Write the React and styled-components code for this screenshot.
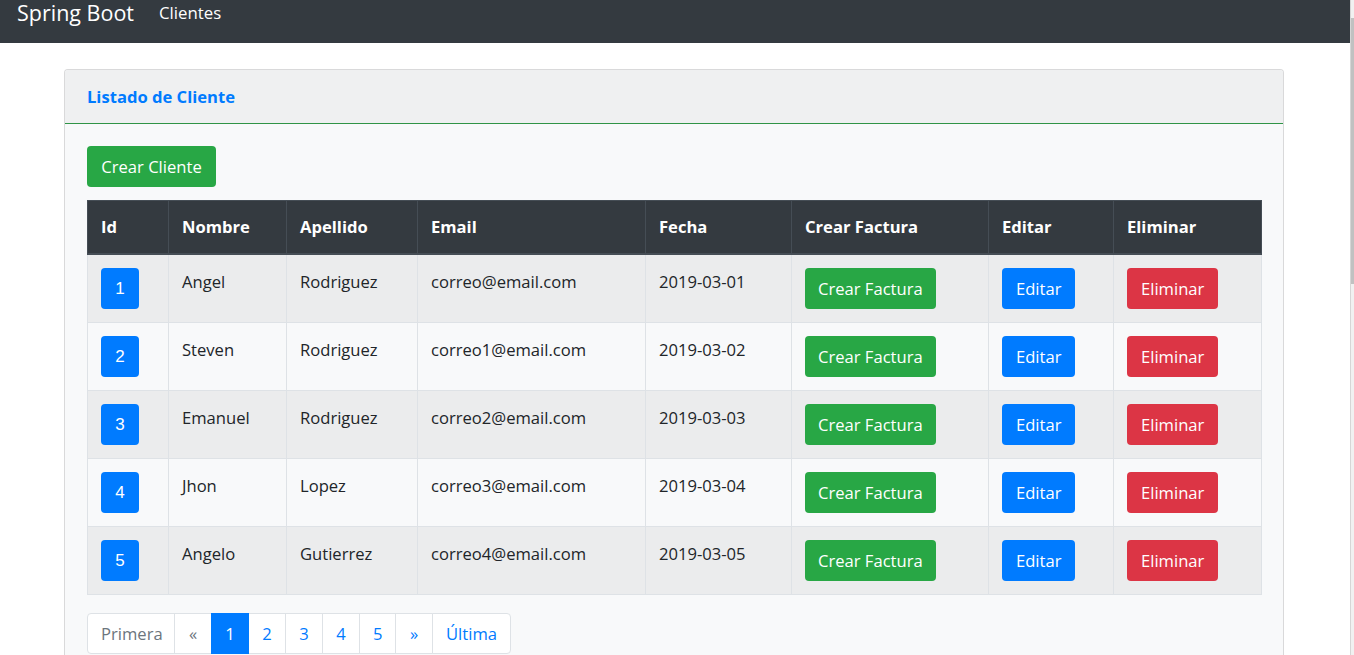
import React from "react";
import styled, { createGlobalStyle } from "styled-components";

const GlobalStyle = createGlobalStyle`
  html, body { margin: 0; padding: 0; background: #fff; overflow: hidden; }
  body {
    font-family: "Open Sans", "Noto Sans", sans-serif;
    color: #212529;
    font-size: 16.6px;
  }
  * { box-sizing: border-box; }
`;

const Page = styled.div`
  width: 1350px;
  height: 655px;
`;

const Navbar = styled.nav`
  height: 43px;
  background: #343a40;
  display: flex;
  align-items: flex-start;
  padding: 0 17px;
`;

const Brand = styled.a`
  color: #fff;
  font-size: 21.5px;
  line-height: 26px;
  margin-right: 25px;
  text-decoration: none;
`;

const NavLink = styled.a`
  color: #fff;
  font-size: 16.8px;
  line-height: 26px;
  text-decoration: none;
`;

const Main = styled.main`
  padding: 26px 66px 0 64px;
`;

const Card = styled.section`
  border: 1px solid rgba(0, 0, 0, 0.125);
  border-radius: 4px;
  background: #f8f9fa;
  overflow: hidden;
`;

const CardHeader = styled.header`
  background: #eff0f1;
  border-bottom: 1px solid #2f9446;
  height: 54px;
  padding: 0 22px;
  display: flex;
  align-items: center;
`;

const Title = styled.h5`
  margin: 0;
  color: #007bff;
  font-size: 16.6px;
  font-weight: 700;
`;

const CardBody = styled.div`
  padding: 22px 22px 40px 22px;
`;

const Button = styled.a`
  display: inline-flex;
  align-items: center;
  justify-content: center;
  height: 41px;
  padding: 0 ${(p) => (p.$pad ? p.$pad : 13)}px;
  border-radius: 4px;
  color: #fff;
  font-size: 16.6px;
  text-decoration: none;
  white-space: nowrap;
  background: ${(p) =>
    p.$variant === "success" ? "#28a745" : p.$variant === "danger" ? "#dc3545" : "#007bff"};
`;

const TopButton = styled(Button)`
  margin-bottom: 13px;
  width: 129px;
`;

const Table = styled.table`
  width: 100%;
  border-collapse: collapse;
  table-layout: fixed;
`;

const Th = styled.th`
  background: #343a40;
  color: #fff;
  text-align: left;
  font-weight: 700;
  font-size: 16.6px;
  border: 1px solid #454d55;
  border-bottom: 2px solid #454d55;
  padding: 13px 13px 13px;
  line-height: 26px;
`;

const Tr = styled.tr`
  background: ${(p) => (p.$odd ? "#ebeced" : "#f8f9fa")};
`;

const Td = styled.td`
  border: 1px solid #dee2e6;
  padding: 14px 13px 12px;
  vertical-align: top;
  line-height: 26px;
  font-size: 16.6px;
  height: 68px;
`;

const ButtonTd = styled(Td)`
  padding: 13px 13px;
`;

const IdBadge = styled(Button)`
  width: 38px;
  padding: 0;
  font-family: "Liberation Sans", Arial, sans-serif;
  font-size: 17px;
`;

const Pagination = styled.ul`
  display: flex;
  list-style: none;
  margin: 18px 0 0 0;
  padding: 0;
`;

const PageItem = styled.li`
  & + & a { margin-left: -1px; }
  &:first-child a { border-radius: 4px 0 0 4px; }
  &:last-child a { border-radius: 0 4px 4px 0; }
`;

const PageLink = styled.a`
  display: block;
  height: 41px;
  line-height: 22px;
  padding: 9px 13px;
  font-size: 16.6px;
  border: 1px solid #dee2e6;
  text-decoration: none;
  width: ${(p) => p.$w}px;
  text-align: center;
  white-space: nowrap;
  position: relative;
  background: ${(p) => (p.$active ? "#007bff" : "#fff")};
  border-color: ${(p) => (p.$active ? "#007bff" : "#dee2e6")};
  color: ${(p) => (p.$active ? "#fff" : p.$disabled ? "#6c757d" : "#007bff")};
  z-index: ${(p) => (p.$active ? 1 : 0)};
`;

const Rail = styled.div`
  position: fixed;
  top: 0;
  right: 0;
  width: 4px;
  height: 100%;
  background: #f1f1f1;
  border-left: 1px solid #d6d6d6;
`;

const Thumb = styled.div`
  margin-top: 18px;
  height: 266px;
  background: #c1c1c1;
`;

const cols = [
  ["Id", 81],
  ["Nombre", 118],
  ["Apellido", 131],
  ["Email", 228],
  ["Fecha", 146],
  ["Crear Factura", 197],
  ["Editar", 125],
  ["Eliminar", 148],
];

const clientes = [
  [1, "Angel", "Rodriguez", "correo@email.com", "2019-03-01"],
  [2, "Steven", "Rodriguez", "correo1@email.com", "2019-03-02"],
  [3, "Emanuel", "Rodriguez", "correo2@email.com", "2019-03-03"],
  [4, "Jhon", "Lopez", "correo3@email.com", "2019-03-04"],
  [5, "Angelo", "Gutierrez", "correo4@email.com", "2019-03-05"],
];

const pages = [
  { label: "Primera", disabled: true, w: 88 },
  { label: "«", disabled: true, w: 38 },
  { label: "1", active: true, w: 38 },
  { label: "2", w: 38 },
  { label: "3", w: 38 },
  { label: "4", w: 38 },
  { label: "5", w: 37 },
  { label: "»", w: 38 },
  { label: "Última", w: 79 },
];

export default function App() {
  return (
    <Page>
      <GlobalStyle />
      <Navbar>
        <Brand href="#">Spring Boot</Brand>
        <NavLink href="#">Clientes</NavLink>
      </Navbar>
      <Main>
        <Card>
          <CardHeader>
            <Title>Listado de Cliente</Title>
          </CardHeader>
          <CardBody>
            <TopButton $variant="success" href="#">Crear Cliente</TopButton>
            <Table>
              <colgroup>
                {cols.map(([n, w]) => (
                  <col key={n} style={{ width: w }} />
                ))}
              </colgroup>
              <thead>
                <tr>
                  {cols.map(([n]) => (
                    <Th key={n}>{n}</Th>
                  ))}
                </tr>
              </thead>
              <tbody>
                {clientes.map(([id, nombre, apellido, email, fecha], i) => (
                  <Tr key={id} $odd={i % 2 === 0}>
                    <ButtonTd>
                      <IdBadge href="#">{id}</IdBadge>
                    </ButtonTd>
                    <Td>{nombre}</Td>
                    <Td>{apellido}</Td>
                    <Td>{email}</Td>
                    <Td>{fecha}</Td>
                    <ButtonTd>
                      <Button $variant="success" href="#">Crear Factura</Button>
                    </ButtonTd>
                    <ButtonTd>
                      <Button $pad={14} href="#">Editar</Button>
                    </ButtonTd>
                    <ButtonTd>
                      <Button $pad={14} $variant="danger" href="#">Eliminar</Button>
                    </ButtonTd>
                  </Tr>
                ))}
              </tbody>
            </Table>
            <Pagination>
              {pages.map((p) => (
                <PageItem key={p.label}>
                  <PageLink href="#" $active={p.active} $disabled={p.disabled} $w={p.w}>
                    {p.label}
                  </PageLink>
                </PageItem>
              ))}
            </Pagination>
          </CardBody>
        </Card>
      </Main>
      <Rail>
        <Thumb />
      </Rail>
    </Page>
  );
}
